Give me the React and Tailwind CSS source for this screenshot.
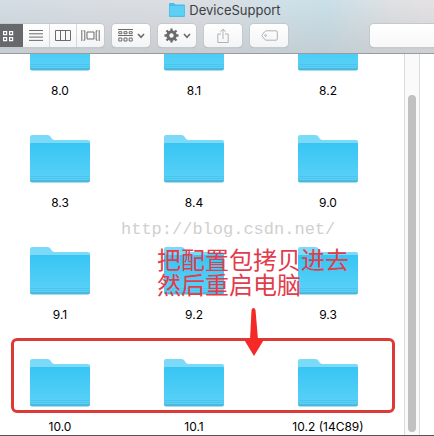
const folders = ['8.0', '8.1', '8.2', '8.3', '8.4', '9.0', '9.1', '9.2', '9.3', '10.0', '10.1', '10.2 (14C89)'];

const toolButton = 'flex h-[23px] items-center justify-center rounded bg-linear-to-b from-white to-[#f3f4f5] text-[#6b6b6b] shadow-[0_0_0_1px_#c3c9cc,0_1px_1px_#9fa6a9]';

function Folder() {
    return (
        <svg width="60" height="48" viewBox="0 0 60 48" aria-hidden="true">
            <defs>
                <linearGradient id="folder" x1="0" y1="0" x2="0" y2="1">
                    <stop offset="0" stopColor="#37c5f3" />
                    <stop offset="1" stopColor="#5bd2f8" />
                </linearGradient>
            </defs>
            <path d="M0 2Q0 0 2 0H17Q19 0 20 1L22 4Q23 5 25 5H58Q60 5 60 7V20H0Z" fill="#7bdaf8" />
            <path d="M0 9Q0 8 1 8H59Q60 8 60 9V45Q60 47 58 47H2Q0 47 0 45Z" fill="url(#folder)" />
            <path d="M0 41.5H60M0 43.5H60" stroke="#48bde4" strokeWidth=".6" />
            <path d="M0 45H60Q60 47.500 58 47.500H2Q0 47.500 0 45Z" fill="#4bb8dc" />
        </svg>
    )
}

function Chevron() {
    return (
        <svg width="8" height="6" viewBox="0 0 8 6" fill="none" stroke="currentColor" strokeWidth="1.6">
            <path d="M1 1L4 4.300L7 1" />
        </svg>
    )
}

function ViewSwitch() {
    return (
        <div className="flex h-[23px] shrink-0 overflow-hidden rounded-r bg-linear-to-b from-white to-[#f3f4f5] text-[#6b6b6b] shadow-[0_0_0_1px_#c3c9cc,0_1px_1px_#9fa6a9]">
            <button aria-label="Icons" className="flex w-[23px] items-center bg-[#66686b] pl-[2px] text-white">
                <svg width="12" height="12" viewBox="0 0 12 12" fill="none" stroke="currentColor" strokeWidth="1.2">
                    <path d="M1.600 1.600h3v3h-3zM7.600 1.600h3v3h-3zM1.600 7.600h3v3h-3zM7.600 7.600h3v3h-3z" />
                </svg>
            </button>
            <button aria-label="List" className="flex w-[27px] items-center justify-center border-r border-[#d5d8da]">
                <svg width="14" height="11" viewBox="0 0 14 11" stroke="currentColor">
                    <path d="M0 .5H14M0 3.800H14M0 7.100H14M0 10.400H14" />
                </svg>
            </button>
            <button aria-label="Columns" className="flex w-[27px] items-center justify-center border-r border-[#d5d8da]">
                <svg width="16" height="11" viewBox="0 0 16 11" fill="none" stroke="currentColor">
                    <path d="M.5 .5H15.500V10.500H.5ZM5.500 .5V10.500M10.500 .5V10.500" />
                </svg>
            </button>
            <button aria-label="Cover Flow" className="flex w-[27px] items-center justify-center">
                <svg width="19" height="11" viewBox="0 0 19 11" fill="none" stroke="currentColor">
                    <path d="M.8 0V11M18.200 0V11M2.500 .8H3.800V10.200H2.500M16.500 .8H15.200V10.200H16.500M6 2H13V9H6Z" />
                </svg>
            </button>
        </div>
    )
}

function Toolbar() {
    return (
        <div className="flex items-center gap-2">
            <ViewSwitch />
            <button aria-label="Arrange" className={`${toolButton} w-[38px] shrink-0 gap-1`}>
                <svg width="15" height="13" viewBox="0 0 15 13" fill="none" stroke="currentColor">
                    <path d="M0 .5H15M0 6.500H15M.8 2.700h3v2h-3zM6 2.700h3v2h-3zM11.200 2.700h3v2h-3zM.8 9h3v3h-3zM6 9h3v3h-3zM11.200 9h3v3h-3z" />
                </svg>
                <Chevron />
            </button>
            <button aria-label="Action" className={`${toolButton} w-[38px] shrink-0 gap-1`}>
                <svg width="15" height="15" viewBox="0 0 15 15" fill="none" stroke="currentColor">
                    <circle cx="7.500" cy="7.500" r="3.700" strokeWidth="3" />
                    <path d="M7.500 .5V3M7.500 12V14.500M.5 7.500H3M12 7.500H14.500M2.500 2.500L4.300 4.300M10.700 10.700L12.500 12.500M12.500 2.500L10.700 4.300M4.300 10.700L2.500 12.500" strokeWidth="2.300" />
                </svg>
                <Chevron />
            </button>
            <button aria-label="Share" disabled className={`${toolButton} w-[38px] shrink-0`}>
                <svg width="12" height="16" viewBox="0 0 12 16" fill="none" stroke="#b0b3b5">
                    <path d="M4 6H.8V14.500H11.200V6H8M6 11V1.200M3.300 3.800L6 1.200L8.700 3.800" />
                </svg>
            </button>
            <button aria-label="Tags" disabled className={`${toolButton} w-[38px] shrink-0`}>
                <svg width="17" height="11" viewBox="0 0 17 11" fill="none" stroke="#b0b3b5">
                    <path d="M5 .8H15Q16.300 .8 16.300 2V9Q16.300 10.200 15 10.200H5Q3.800 10.200 .8 5.500Q3.800 .8 5 .8Z" />
                    <circle cx="4.600" cy="5.500" r=".9" />
                </svg>
            </button>
            <input type="search" aria-label="Search" className="ml-auto h-[23px] w-16 rounded-l bg-linear-to-b from-white to-[#f8f8f8] shadow-[0_0_0_1px_#c3c9cc,0_1px_1px_#9fa6a9] outline-none" />
        </div>
    )
}

function Annotation() {
    return (
        <>
            <p className="absolute top-[166px] left-[121px] font-['Liberation_Mono',monospace] text-[17px] leading-5 whitespace-nowrap text-[#d0d0d0]">http://blog.csdn.net/</p>
            <p className="absolute top-[192px] left-[157px] font-['Noto_Sans_CJK_SC',sans-serif] text-2xl leading-[25px] whitespace-nowrap text-[#e23c4c]">
                把配置包拷贝进去<br />然后重启电脑
            </p>
            <div className="absolute top-[284px] right-[9px] left-[11px] h-[75px] rounded-md border-3 border-[#dc3a36]" />
            <svg className="absolute top-[254px] left-[243px]" width="22" height="48" viewBox="0 0 22 48" fill="#f52a26">
                <path d="M8.500 2Q9 0 10.500 0Q12 0 12.500 2L15 31.500H21L11 48L1 31.500H7Z" />
            </svg>
        </>
    )
}

export default function App() {
    return (
        <div className="flex h-screen flex-col overflow-hidden border-b border-[#555] bg-white font-[Inter,'Liberation_Sans',sans-serif]">
            <header className="shrink-0 border-b border-[#999c9e] bg-[linear-gradient(to_bottom,transparent,#b9bdc180),linear-gradient(to_right,#d3dde4,#dadee3_25%,#dbdee2_48%,#d2e1e8_62%,#c9e0e8_75%,#dfe1e3_90%,#e5e2e4)] pb-[6px]">
                <h1 className="mb-1 flex h-5 items-center justify-center gap-1 pl-4 text-[13px] leading-5 text-[#3c4043]">
                    <svg width="16" height="14" viewBox="0 0 16 14" aria-hidden="true">
                        <path d="M0 1Q0 0 1 0H5L6.500 1.500H15Q16 1.500 16 2.500V13Q16 14 15 14H1Q0 14 0 13Z" fill="#45bfe9" />
                        <path d="M.7 3H15.300V12.700H.7Z" fill="#5fd0f5" />
                    </svg>
                    DeviceSupport
                </h1>
                <Toolbar />
            </header>
            <main className="flex min-h-0 flex-1">
                <div className="relative flex-1 overflow-hidden">
                    <ul className="-ml-[7px] mr-[9px] grid h-full grid-cols-3 content-end">
                        {folders.map((name) => (
                            <li key={name} className="flex h-28 flex-col items-center justify-end gap-3 text-[12px] leading-4 text-black">
                                <Folder />
                                <span>{name}</span>
                            </li>
                        ))}
                    </ul>
                    <Annotation />
                </div>
                <div className="flex w-4 justify-center border-x border-[#dcdcdc] bg-[#fafafa] pt-[41px] pb-[3px]">
                    <div className="w-2 rounded-full bg-[#c1c1c1]" />
                </div>
                <div className="w-[14px]" />
            </main>
        </div>
    )
}
